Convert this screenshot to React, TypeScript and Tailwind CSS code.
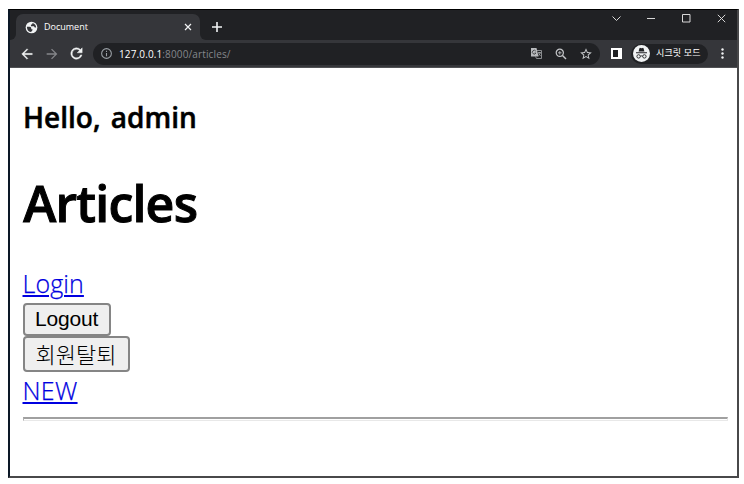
import type { ReactNode } from "react";

const UI_FONT = "font-['Open_Sans','Noto_Sans_CJK_KR',sans-serif]";

function Icon({ size, children, className = "" }: { size: number; children: ReactNode; className?: string }) {
  return (
    <svg width={size} height={size} viewBox="0 0 24 24" fill="currentColor" className={`shrink-0 ${className}`}>
      {children}
    </svg>
  );
}

function TabStrip() {
  return (
    <div className="flex h-[30px] items-end bg-[#202124] text-white">
      <div className="h-[26px] w-1.5 bg-[#35363a]">
        <div className="h-full w-full rounded-br-md bg-[#202124]" />
      </div>
      <div className="flex h-[26px] w-[184px] items-center rounded-t-[7px] bg-[#35363a] pr-[8px] pl-[9px]">
        <Icon size={13} className="text-[#f1f3f4]">
          <circle cx="12" cy="12" r="10.800" />
          <path d="M3.500 10.500H8q3 0 3.500 2.500v2h2.500q0 3.500-3.500 5.500-6.500-1-7-10ZM14 3.500q0 3-3 3.500v2.500h5.500l1.500 2.500h2.500q0-6-6.500-8.500Z" fill="#35363a" />
        </Icon>
        <span className="ml-[6px] text-[9px] leading-3">Document</span>
        <svg width="8" height="8" viewBox="0 0 8 8" className="ml-auto" stroke="#f1f3f4" strokeWidth="1.200">
          <path d="M1 1l6 6M7 1L1 7" />
        </svg>
      </div>
      <div className="h-[26px] w-1.5 bg-[#35363a]">
        <div className="h-full w-full rounded-bl-md bg-[#202124]" />
      </div>
      <svg width="10" height="10" viewBox="0 0 10 10" className="mb-2 ml-[6px]" stroke="#f1f3f4" strokeWidth="1.600">
        <path d="M5 0v10M0 5h10" />
      </svg>
      <div className="mr-[11px] mb-[17px] ml-auto flex items-center gap-[26.500px] text-[#d8d8d8]">
        <svg width="9" height="9" viewBox="0 0 9 9" fill="none" stroke="currentColor">
          <path d="M.5 2.500l4 4 4-4" />
        </svg>
        <svg width="8" height="9" viewBox="0 0 8 9" fill="none" stroke="currentColor">
          <path d="M0 4.500h8" />
        </svg>
        <svg width="9" height="9" viewBox="0 0 9 9" fill="none" stroke="currentColor">
          <path d="M.5.5h7.500v7.500H.5z" />
        </svg>
        <svg width="9" height="9" viewBox="0 0 9 9" fill="none" stroke="currentColor">
          <path d="M.8.8l7.400 7.400M8.200.8L.8 8.200" />
        </svg>
      </div>
    </div>
  );
}

function Toolbar() {
  return (
    <div className="flex h-7 items-center border-b border-[#505154] bg-[#35363a] pl-[9px] text-[#f1f3f4]">
      <Icon size={16}>
        <path d="M20 11H7.800l5.600-5.600L12 4l-8 8 8 8 1.400-1.400L7.800 13H20v-2Z" stroke="currentColor" strokeWidth=".4" />
      </Icon>
      <Icon size={16} className="ml-[9px] text-[#85868a]">
        <path d="M4 11h12.200l-5.600-5.600L12 4l8 8-8 8-1.400-1.400 5.600-5.600H4v-2Z" />
      </Icon>
      <Icon size={17} className="ml-[8px]">
        <path d="M17.650 6.350A8 8 0 1 0 19.730 14h-2.080A6 6 0 1 1 12 6c1.660 0 3.140.69 4.220 1.780L13 11h7V4l-2.350 2.350Z" stroke="currentColor" strokeWidth=".6" />
      </Icon>
      <div className="ml-[8px] flex h-[22px] w-[507px] items-center rounded-full bg-[#202124] pr-[7px] pl-[7px]">
        <Icon size={13} className="text-[#9aa0a6]">
          <path d="M11 7h2v2h-2V7Zm0 4h2v6h-2v-6Zm1-9a10 10 0 1 0 0 20 10 10 0 0 0 0-20Zm0 18a8 8 0 1 1 0-16 8 8 0 0 1 0 16Z" />
        </Icon>
        <span className="ml-[6px] text-[10px] leading-3 tracking-[0.130px] text-[#85888c]">
          <span className="text-white">127.0.0.1</span>:8000/articles/
        </span>
        <svg width="13" height="13" viewBox="0 0 13 13" className="ml-auto" fill="none" stroke="#a5a7aa">
          <path d="M7 3.500h4.500v8h-5l-1-2M8 5.500h3M9.500 5v1M8.500 8.500l2-2.500M8.500 6l2 3" strokeWidth=".8" />
          <path d="M1 1h5.500l2 8.500H1z" fill="#b8babd" stroke="none" />
          <path d="M5.800 4.100a1.900 1.900 0 1 0 .1 2H4.500" stroke="#303134" strokeWidth=".8" />
        </svg>
        <svg width="12" height="12" viewBox="0 0 12 12" className="ml-[12px]" fill="none" stroke="#c5c7ca">
          <circle cx="4.800" cy="4.800" r="3.600" strokeWidth="1.200" />
          <path d="M7.500 7.500l3.500 3.500" strokeWidth="1.400" />
          <path d="M4.800 3v3.600M3 4.800h3.600" strokeWidth=".8" />
        </svg>
        <Icon size={14} className="ml-[12px] text-[#c5c7ca]">
          <path d="m22 9.240-7.190-.62L12 2 9.190 8.630 2 9.240l5.460 4.730L5.820 21 12 17.270 18.180 21l-1.630-7.030L22 9.240ZM12 15.400l-3.760 2.270 1-4.280-3.320-2.880 4.380-.38L12 6.100l1.710 4.040 4.380.38-3.320 2.880 1 4.280L12 15.400Z" />
        </Icon>
      </div>
      <svg width="11" height="11" viewBox="0 0 11 11" className="ml-[11px] shrink-0">
        <path d="M0 0h11v11H0z" fill="#fff" />
        <path d="M2 2h5v7H2z" fill="#202124" />
      </svg>
      <div className="ml-[9px] flex h-5 w-[77px] shrink-0 items-center rounded-full bg-[#202124] pl-[2px]">
        <svg width="17" height="17" viewBox="0 0 17 17" className="shrink-0">
          <circle cx="8.500" cy="8.500" r="8.500" fill="#f1f3f4" />
          <path d="M5.600 6.600l.8-3.200q.3-.8 1-.5l1.100.3 1.100-.3q.7-.3 1 .5l.8 3.200zM3 7.300h11v1H3z" fill="#202124" />
          <g fill="none" stroke="#202124" strokeWidth=".9">
            <circle cx="5.600" cy="11.400" r="1.700" />
            <circle cx="11.400" cy="11.400" r="1.700" />
            <path d="M7.300 11.200q1.200-.7 2.400 0" />
          </g>
        </svg>
        <span className="-mt-px ml-[6px] text-[9px] leading-3 tracking-[0.150px] whitespace-nowrap text-white">시크릿 모드</span>
      </div>
      <svg width="3" height="11" viewBox="0 0 3 11" className="ml-[13px] shrink-0" fill="#f1f3f4">
        <circle cx="1.500" cy="1.500" r="1.200" />
        <circle cx="1.500" cy="5.500" r="1.200" />
        <circle cx="1.500" cy="9.500" r="1.200" />
      </svg>
    </div>
  );
}

function Page() {
  return (
    <main className="flex grow flex-col items-start bg-white pr-[10px] pl-[12.500px] text-black">
      <h2 className="mt-[29px] ml-[0.500px] h-10 text-[28px] leading-10 font-semibold whitespace-nowrap [-webkit-text-stroke:0.500px_black] [word-spacing:3px]">
        Hello, admin
      </h2>
      <h1 className="mt-[32px] ml-[0.800px] h-[68px] text-[50px] leading-[68px] font-semibold tracking-[-0.800px] whitespace-nowrap [-webkit-text-stroke:1px_black]">
        Articles
      </h1>
      <a href="#login" className="mt-[28px] h-9 text-[25px] leading-9 font-light tracking-[0.100px] text-[#0000e0] underline decoration-2 underline-offset-[2px] [-webkit-text-stroke:0.250px_#0000e0]">
        Login
      </a>
      <button className="mt-[2px] flex h-[33px] w-[88px] items-center justify-center rounded-[4px] border-2 border-[#858585] bg-[#efefef] pb-[3px] font-['Liberation_Sans',sans-serif] text-[21px] leading-none tracking-[-0.200px]">
        Logout
      </button>
      <button className="flex h-[36px] w-[107px] items-center justify-center rounded-[4px] border-2 border-[#858585] bg-[#efefef] pb-[2px] font-['Noto_Sans_CJK_KR',sans-serif] text-[22px] leading-none font-light">
        회원탈퇴
      </button>
      <a href="#new" className="h-9 text-[25px] leading-9 font-light tracking-[0.300px] text-[#0000e0] underline decoration-2 underline-offset-[2px] [-webkit-text-stroke:0.250px_#0000e0]">
        NEW
      </a>
      <hr className="mt-[9px] h-[4px] w-[705px] border border-t-2 border-[#e8e8e8] border-t-[#a0a0a0] border-l-[#b0b0b0]" />
    </main>
  );
}

export default function App() {
  return (
    <div className={`h-[484px] w-[744px] bg-white pt-[9px] pl-2 ${UI_FONT}`}>
      <div className="flex h-[469px] w-[731px] flex-col border-t border-r-2 border-b-2 border-l-2 border-t-black border-r-[#48484a] border-b-[#48484a] border-l-[#0c1826]">
        <TabStrip />
        <Toolbar />
        <Page />
      </div>
    </div>
  );
}
